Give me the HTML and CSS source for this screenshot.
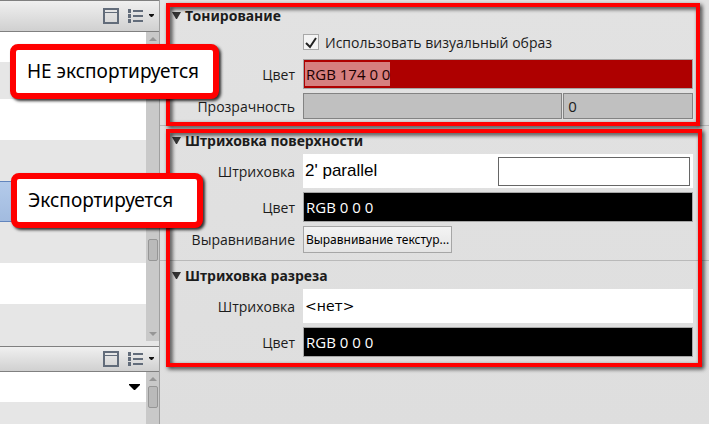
FILE: index.html
```
<!DOCTYPE html>
<html lang="ru">
<head>
  <meta charset="UTF-8">
  <meta name="viewport" content="width=device-width, initial-scale=1.0">
  <title>Свойства материала</title>
  <link rel="stylesheet" href="styles.css">
</head>
<body>
  <div class="app">
    <!-- список материалов -->
    <aside class="sidebar">
      <div class="toolbar">
        <button class="toolBtn" type="button" aria-label="Панель">
          <svg width="16" height="16" viewBox="0 0 16 16"><path d="M1 1h14v14H1z" fill="none" stroke="#626c7a" stroke-width="2"/><path d="M2 4.5h12" stroke="#626c7a"/></svg>
        </button>
        <button class="toolBtn" type="button" aria-label="Вид списка">
          <svg width="27" height="14" viewBox="0 0 27 14"><path d="M0 0h3v4H0zM0 5h3v4H0zM0 10h3v4H0zM5 1h10v2H5zM5 6h10v2H5zM5 11h10v2H5z" fill="#626c7a"/><path d="M21 5h5v1l-2 2h-1l-2-2z" fill="#111"/></svg>
        </button>
      </div>
      <div class="listArea">
        <ul class="list">
          <li class="row first"></li>
          <li class="row second"></li>
          <li class="row"></li>
          <li class="row"></li>
          <li class="row active"></li>
          <li class="row alt"></li>
          <li class="row"></li>
          <li class="row rest"></li>
        </ul>
        <div class="scrollbar">
          <svg width="8" height="4" viewBox="0 0 8 4"><path d="M4 0l4 4H0z" fill="#969696"/></svg>
          <span class="thumb middle"></span>
          <svg width="8" height="4" viewBox="0 0 8 4"><path d="M0 0h8L4 4z" fill="#969696"/></svg>
        </div>
      </div>
      <div class="toolbar">
        <button class="toolBtn" type="button" aria-label="Панель">
          <svg width="16" height="16" viewBox="0 0 16 16"><path d="M1 1h14v14H1z" fill="none" stroke="#626c7a" stroke-width="2"/><path d="M2 4.5h12" stroke="#626c7a"/></svg>
        </button>
        <button class="toolBtn" type="button" aria-label="Вид списка">
          <svg width="27" height="14" viewBox="0 0 27 14"><path d="M0 0h3v4H0zM0 5h3v4H0zM0 10h3v4H0zM5 1h10v2H5zM5 6h10v2H5zM5 11h10v2H5z" fill="#626c7a"/><path d="M21 5h5v1l-2 2h-1l-2-2z" fill="#111"/></svg>
        </button>
      </div>
      <div class="listArea bottom">
        <ul class="list">
          <li class="row first">
            <svg width="11" height="6" viewBox="0 0 11 6"><path d="M0 0h11v1L6 6H5L0 1z" fill="#000"/></svg>
          </li>
          <li class="row rest"></li>
        </ul>
        <div class="scrollbar">
          <svg width="8" height="4" viewBox="0 0 8 4"><path d="M4 0l4 4H0z" fill="#969696"/></svg>
          <span class="thumb"></span>
        </div>
      </div>
    </aside>

    <!-- свойства графики -->
    <main class="panel">
      <div class="group groupShading">
        <section class="section">
          <h2><svg width="9" height="7" viewBox="0 0 9 7"><path d="M0 0h9L5 7H4z" fill="#333"/></svg>Тонирование</h2>
          <div class="field">
            <span></span>
            <label class="check"><input type="checkbox" checked>Использовать визуальный образ</label>
          </div>
          <div class="field">
            <label for="shadeColor">Цвет</label>
            <input class="color red" id="shadeColor" type="text" value="RGB 174 0 0">
          </div>
          <div class="field">
            <label for="opacity">Прозрачность</label>
            <div class="opacity">
              <span class="track"></span>
              <input class="number" id="opacity" type="text" value="0">
            </div>
          </div>
        </section>
      </div>

      <div class="group groupPattern">
        <section class="section">
          <h2><svg width="9" height="7" viewBox="0 0 9 7"><path d="M0 0h9L5 7H4z" fill="#333"/></svg>Штриховка поверхности</h2>
          <div class="field">
            <label for="surfacePattern">Штриховка</label>
            <button class="pattern" id="surfacePattern" type="button"><span>2' parallel</span><span class="preview"></span></button>
          </div>
          <div class="field">
            <label for="surfaceColor">Цвет</label>
            <input class="color" id="surfaceColor" type="text" value="RGB 0 0 0">
          </div>
          <div class="field">
            <label for="align">Выравнивание</label>
            <button class="alignBtn" id="align" type="button">Выравнивание текстур...</button>
          </div>
        </section>
        <section class="section last">
          <h2><svg width="9" height="7" viewBox="0 0 9 7"><path d="M0 0h9L5 7H4z" fill="#333"/></svg>Штриховка разреза</h2>
          <div class="field">
            <label for="cutPattern">Штриховка</label>
            <button class="pattern none" id="cutPattern" type="button">&lt;нет&gt;</button>
          </div>
          <div class="field">
            <label for="cutColor">Цвет</label>
            <input class="color" id="cutColor" type="text" value="RGB 0 0 0">
          </div>
        </section>
      </div>
    </main>

    <!-- выноски -->
    <div class="callout calloutNo">НЕ экспортируется</div>
    <div class="callout calloutYes">Экспортируется</div>
  </div>
</body>
</html>
```
FILE: styles.css
```
* {
  box-sizing: border-box;
}
body {
  margin: 0;
  background-color: #e0e0e0;
  color: #1c1c1c;
  font-family: "Open Sans", "Noto Sans", sans-serif;
  font-size: 14px;
}
button, input {
  font-family: inherit;
  font-size: 15px;
  color: inherit;
  margin: 0;
  border-radius: 0;
}
svg {
  display: block;
  flex: none;
}
.app {
  position: relative;
  display: flex;
  min-height: 100vh;
  overflow: hidden;
}
/* левая колонка */
.sidebar {
  display: flex;
  flex-direction: column;
  width: 160px;
  flex: none;
  border-right: 1px solid #a0a0a0;
  background-color: #e6e6e6;
}
.toolbar {
  display: flex;
  align-items: center;
  justify-content: flex-end;
  gap: 9px;
  height: 26px;
  padding-right: 4px;
  border-top: 1px solid #808080;
  border-bottom: 1px solid #808080;
  background: linear-gradient(#f0f0f0, #d0d0d0);
}
.toolbar:first-child {
  height: 32px;
}
.toolBtn {
  padding: 0;
  border: none;
  background: none;
}
.listArea {
  display: flex;
  height: 309px;
  margin-bottom: 5px;
}
.listArea.bottom {
  flex: 1;
  height: auto;
  margin: 0;
}
.list {
  flex: 1;
  display: flex;
  flex-direction: column;
  margin: 0;
  padding: 0;
  list-style: none;
}
.row {
  height: 41px;
  background-color: #fff;
}
.row:nth-child(even) {
  background-color: #e6e6e6;
}
/* ряд над выбранным тоже серый */
.row:nth-child(4), .row.alt {
  background-color: #e6e6e6;
}
.row.first {
  display: flex;
  align-items: center;
  justify-content: flex-end;
  height: 30px;
  padding-right: 6px;
}
.row.second {
  height: 37px;
}
.row.active {
  border-top: 1px solid #6285bd;
  border-bottom: 1px solid #6285bd;
  background: linear-gradient(#b3caea, #a2bbdf);
}
.row.rest {
  flex: 1;
}
.scrollbar {
  display: flex;
  flex-direction: column;
  align-items: center;
  justify-content: space-between;
  width: 13px;
  padding: 5px 0;
  background-color: #c9c9c9;
}
.bottom .scrollbar {
  justify-content: flex-start;
  gap: 5px;
}
.thumb {
  width: 10px;
  height: 22px;
  border: 1px solid #969696;
  border-radius: 2px;
  background-color: #bababa;
}
.thumb.middle {
  margin-top: 126px;
}
/* правая панель */
.panel {
  flex: 1;
  min-width: 0;
  background: linear-gradient(#e2e2e2, #dedede);
}
.group {
  position: relative;
}
.section {
  display: flex;
  flex-direction: column;
  gap: 4px;
  padding: 5px 16px 7px 12px;
  border-bottom: 1px solid #b9b9b9;
}
.groupShading .section {
  padding: 6px 16px 6px 12px;
}
.section.last {
  padding-bottom: 10px;
  border-bottom: none;
}
h2 {
  display: flex;
  align-items: center;
  gap: 4px;
  margin: 0;
  height: 19px;
  font-family: "Noto Sans", "Open Sans", sans-serif;
  font-size: 14px;
  font-weight: bold;
}
.field {
  display: grid;
  grid-template-columns: 123px 1fr;
  column-gap: 8px;
  align-items: center;
}
.field > label:first-child {
  text-align: right;
}
.check {
  display: flex;
  align-items: center;
  gap: 6px;
  height: 26px;
}
.check input {
  appearance: none;
  width: 16px;
  height: 16px;
  border: 1px solid #a8a8a8;
  background: #f4f4f4 url("data:image/svg+xml,%3Csvg xmlns='http://www.w3.org/2000/svg' viewBox='0 0 14 14'%3E%3Cpath d='M2 8l4 4 6-9' fill='none' stroke='%23222' stroke-width='2'/%3E%3C/svg%3E") center no-repeat;
}
.color {
  width: 100%;
  height: 30px;
  padding: 0 2px;
  border: 1px solid #a6a6a6;
  background-color: #000;
  color: #fff;
}
/* выделенный текст */
.color.red {
  background: linear-gradient(#d67f7f, #d67f7f) 1px 2px / 85px 24px no-repeat #ae0000;
  color: #1c0000;
}
.opacity {
  display: grid;
  grid-template-columns: 2fr 1fr;
  gap: 1px;
}
.track, .number {
  width: 100%;
  height: 26px;
  border: 1px solid #838383;
  background-color: #c0c0c0;
}
.number {
  padding: 0 4px;
}
.pattern {
  display: flex;
  align-items: center;
  justify-content: space-between;
  height: 34px;
  padding: 0 3px 0 2px;
  border: none;
  background-color: #fff;
  color: #000;
  font-family: "Liberation Sans", Arial, sans-serif;
  font-size: 17px;
}
.pattern.none {
  font-family: "DejaVu Sans", Verdana, sans-serif;
  font-size: 14px;
}
.preview {
  width: 50%;
  height: 29px;
  border: 1px solid #666;
}
.alignBtn {
  justify-self: start;
  width: 149px;
  height: 27px;
  padding: 0;
  border: 1px solid #a6a6a6;
  background: linear-gradient(#f4f4f4, #e4e4e4);
  color: #000;
  font-family: "Noto Sans", "Open Sans", sans-serif;
  font-size: 12px;
  white-space: nowrap;
}
/* красные рамки поверх панели */
.group::after {
  content: "";
  position: absolute;
  top: 3px;
  right: 9px;
  bottom: 0;
  left: 6px;
  border: 4px solid #f00;
  filter: drop-shadow(2px 2px 2px rgba(0, 0, 0, 0.8));
  pointer-events: none;
}
.groupPattern::after {
  right: 7px;
}
.callout {
  position: absolute;
  left: 10px;
  top: 44px;
  padding: 7px 14px 8px 11px;
  border: 6px solid #f00;
  border-radius: 8px;
  background-color: #fff;
  box-shadow: 2px 2px 3px rgba(0, 0, 0, 0.8);
  color: #000;
  font-family: "Noto Sans", "Open Sans", sans-serif;
  font-size: 19px;
  line-height: 28px;
}
.calloutYes {
  left: 11px;
  top: 173px;
  padding-right: 24px;
}
```
